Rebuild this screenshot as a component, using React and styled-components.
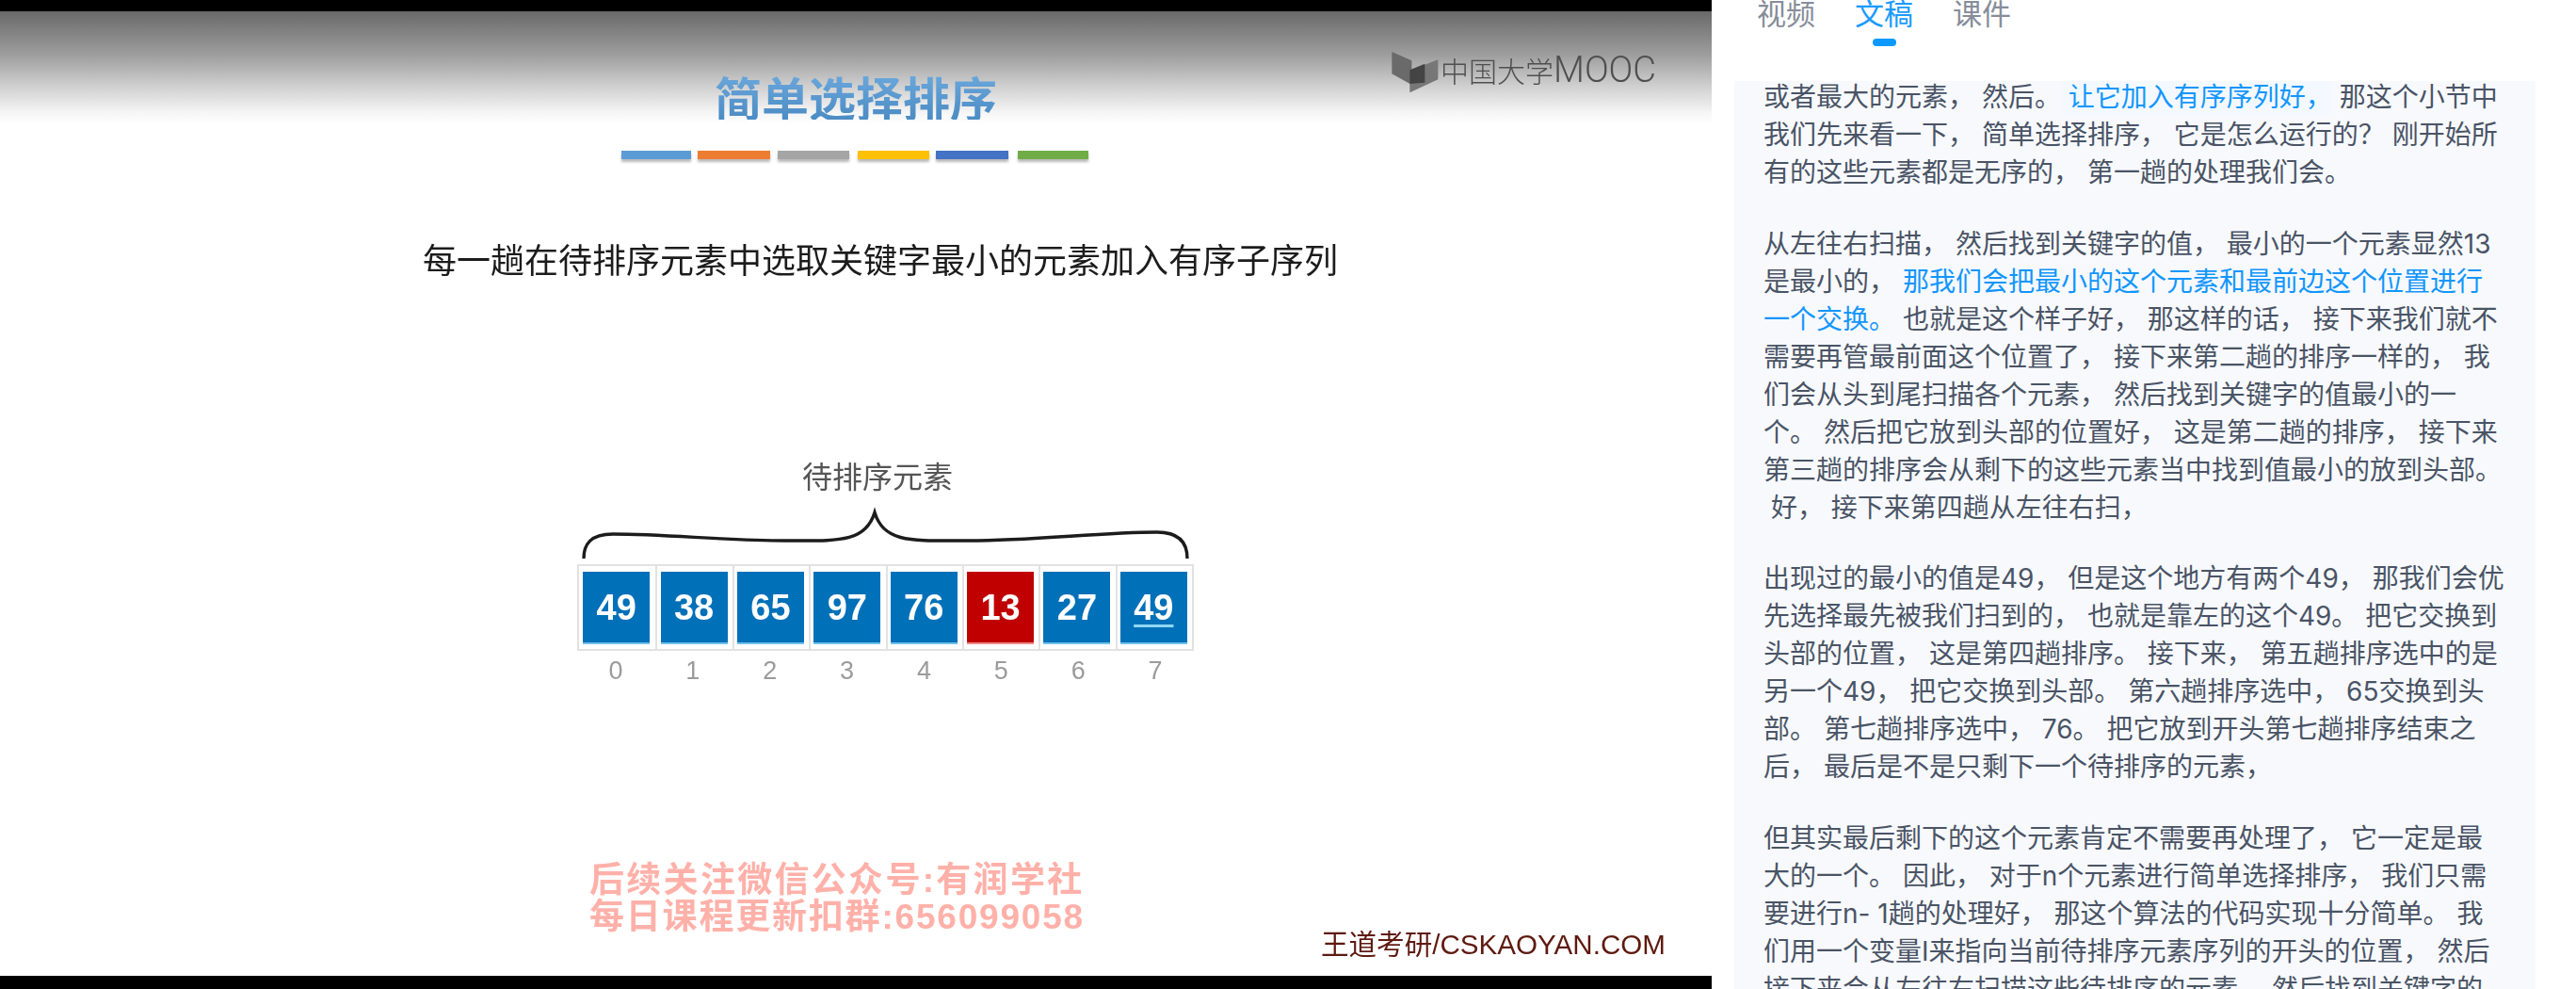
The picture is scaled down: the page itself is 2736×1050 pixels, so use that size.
import React from "react";
import styled, { createGlobalStyle } from "styled-components";

const Global = createGlobalStyle`
  html, body { margin: 0; padding: 0; background: #fff; overflow: hidden; }
  body { font-family: Inter, "Noto Sans CJK SC", sans-serif; }
`;

const Page = styled.div`
  display: flex;
  width: 2736px;
  height: 1050px;
  overflow: hidden;
`;

const VideoFrame = styled.div`
  flex: 0 0 1818px;
  height: 1050px;
  box-sizing: border-box;
  padding: 12px 0 14px;
  background: #000;
  display: flex;
`;

const Slide = styled.div`
  position: relative;
  flex: 1;
  display: flex;
  flex-direction: column;
  overflow: hidden;
  background: linear-gradient(to bottom, #696969 0, #a0a0a0 48px, #d0d0d0 80px, #f6f6f6 108px, #fff 120px);
  filter: blur(0.6px);
`;

const Logo = styled.div`
  position: absolute;
  top: 33px;
  left: 1470px;
  display: flex;
  align-items: center;
  color: #4f4f4f;
`;

const LogoCjk = styled.span`
  font-family: "Noto Sans CJK SC", sans-serif;
  font-weight: 300;
  font-size: 30px;
  line-height: 50px;
`;

const LogoLatin = styled.span`
  font-family: Roboto, sans-serif;
  font-weight: 300;
  font-size: 38px;
  line-height: 50px;
`;

const Title = styled.div`
  align-self: center;
  margin-top: 65px;
  font-family: "Noto Sans CJK SC", sans-serif;
  font-weight: 700;
  font-size: 50px;
  line-height: 50px;
  background: linear-gradient(to bottom, #6ba8dc, #4c8cc4);
  -webkit-background-clip: text;
  background-clip: text;
  color: transparent;
`;

const Bars = styled.div`
  display: flex;
  margin: 33px 0 0 660px;
`;

const Bar = styled.div`
  width: ${(p) => p.$w}px;
  height: 9px;
  margin-right: ${(p) => p.$gap}px;
  background: ${(p) => p.$c};
  box-shadow: 0 3px 3px rgba(0, 0, 0, 0.28);
`;

const Subtitle = styled.div`
  margin: 86px 0 0 449px;
  font-family: "Noto Sans CJK SC", sans-serif;
  font-size: 36px;
  line-height: 38px;
  color: #1c1c1c;
  white-space: nowrap;
`;

const ArrayLabel = styled.div`
  margin: 195px 0 0 852px;
  font-family: "Noto Sans CJK SC", sans-serif;
  font-size: 32px;
  line-height: 32px;
  color: #555;
`;

const Brace = styled.svg`
  display: block;
  margin: 23px 0 0 619px;
  width: 643px;
  height: 50px;
  overflow: visible;
`;

const Cells = styled.div`
  display: grid;
  grid-template-columns: repeat(8, 1fr);
  margin: 6px 0 0 613px;
  width: 655px;
  height: 92px;
  box-sizing: border-box;
  border: 2px solid #e2e2e2;
`;

const Cell = styled.div`
  display: flex;
  align-items: flex-start;
  justify-content: center;
  padding: 6px 2px 0 0;
  border-left: ${(p) => (p.$first ? "none" : "2px solid #e2e2e2")};
`;

const CellBox = styled.div`
  width: 71px;
  height: 77px;
  box-sizing: border-box;
  display: flex;
  align-items: center;
  justify-content: center;
  padding-top: 2px;
  background: ${(p) => (p.$red ? "#c00000" : "#0070b8")};
  border-bottom: 2px solid ${(p) => (p.$red ? "#e88" : "#6fc0ea")};
  color: #fff;
  font-family: "Liberation Sans", sans-serif;
  font-weight: 700;
  font-size: 38px;
  text-decoration: ${(p) => (p.$mark ? "underline" : "none")};
  text-decoration-color: #8fd8f4;
  text-decoration-thickness: 3px;
  text-underline-offset: 5px;
`;

const Indices = styled.div`
  display: grid;
  grid-template-columns: repeat(8, 1fr);
  margin: 8px 0 0 613px;
  width: 655px;
`;

const Index = styled.div`
  text-align: center;
  font-family: "Liberation Sans", sans-serif;
  font-size: 27px;
  line-height: 27px;
  color: #9b9b9b;
`;

const SlideFooter = styled.div`
  margin-top: auto;
  display: flex;
  align-items: flex-end;
  padding: 0 49px 17px 626px;
`;

const Watermark = styled.div`
  display: flex;
  flex-direction: column;
  gap: 1px;
  margin-bottom: 26px;
  color: #ffb1a9;
  font-family: "Liberation Sans", "Noto Sans CJK SC", sans-serif;
  font-weight: 700;
  font-size: 37px;
  line-height: 38px;
  white-space: nowrap;
`;

const WatermarkLine = styled.div`
  letter-spacing: ${(p) => p.$ls}px;
`;

const Credit = styled.div`
  margin-left: auto;
  font-family: "Liberation Sans", "Noto Sans CJK SC", sans-serif;
  font-size: 29.6px;
  line-height: 32px;
  color: #5e1a10;
  white-space: nowrap;
`;

const Side = styled.div`
  flex: 1;
  min-width: 0;
  display: flex;
  flex-direction: column;
  height: 1050px;
  padding: 0 43px 0 24px;
  box-sizing: border-box;
`;

const Tabs = styled.div`
  flex: 0 0 49px;
  display: flex;
  align-items: flex-end;
  gap: 42px;
  padding-left: 24px;
  overflow: hidden;
`;

const Tab = styled.div`
  display: flex;
  flex-direction: column;
  align-items: center;
  gap: 11px;
  font-family: "Noto Sans CJK SC", sans-serif;
  font-size: 31px;
  line-height: 34px;
  color: ${(p) => (p.$active ? "#1a9bff" : "#868d99")};
`;

const TabMark = styled.div`
  width: 25px;
  height: 8px;
  border-radius: 4px;
  background: ${(p) => (p.$active ? "#0d99ff" : "transparent")};
`;

const Transcript = styled.div`
  margin-top: 37px;
  flex: 1;
  min-height: 0;
  overflow: hidden;
  background: #f7f9fd;
  padding: 0 29px 0 31px;
`;

const TranscriptScroll = styled.div`
  margin-top: -3px;
`;

const Para = styled.p`
  margin: 0 0 35.5px;
  font-size: 28px;
  line-height: 40px;
  color: #4a5465;
`;

const Hl = styled.span`
  color: #1296ff;
  background: ${(p) => (p.$bg ? "#f3f9ff" : "transparent")};
  padding: 2px 0;
`;

const bars = [
  [74, 7, "#5b9bd5"],
  [77, 8, "#ed7d31"],
  [76, 9, "#a5a5a5"],
  [76, 7, "#ffc000"],
  [77, 10, "#4472c4"],
  [75, 0, "#70ad47"],
];
const values = [49, 38, 65, 97, 76, 13, 27, 49];

export default function App() {
  return (
    <Page>
      <Global />
      <VideoFrame>
        <Slide>
          <Logo>
            <svg width="60" height="57" viewBox="0 0 180 171">
              <polygon points="25,30 88,58 88,135 25,100" fill="#6a6a6a" />
              <polygon points="82,90 172,55 172,118 82,160" fill="#777" />
              <polygon points="82,88 130,68 130,128 82,132" fill="#444" />
            </svg>
            <LogoCjk>中国大学</LogoCjk>
            <LogoLatin>MOOC</LogoLatin>
          </Logo>
          <Title>简单选择排序</Title>
          <Bars>
            {bars.map(([w, gap, c]) => (
              <Bar key={c} $w={w} $gap={gap} $c={c} />
            ))}
          </Bars>
          <Subtitle>每一趟在待排序元素中选取关键字最小的元素加入有序子序列</Subtitle>
          <ArrayLabel>待排序元素</ArrayLabel>
          <Brace viewBox="0 0 643 50">
            <path
              d="M1 50 C1 35 8 24 32 24 C90 24 150 31 215 31 C270 31 300 34 310 1 C320 34 350 31 410 31 C480 31 550 22 610 22 C635 22 642 35 642 50"
              fill="none"
              stroke="#1c1c1c"
              strokeWidth="3.4"
            />
          </Brace>
          <Cells>
            {values.map((v, i) => (
              <Cell key={i} $first={i === 0}>
                <CellBox $red={v === 13} $mark={i === 7}>{v}</CellBox>
              </Cell>
            ))}
          </Cells>
          <Indices>
            {values.map((_, i) => (
              <Index key={i}>{i}</Index>
            ))}
          </Indices>
          <SlideFooter>
            <Watermark>
              <WatermarkLine $ls={2.3}>后续关注微信公众号:有润学社</WatermarkLine>
              <WatermarkLine $ls={1.8}>每日课程更新扣群:656099058</WatermarkLine>
            </Watermark>
            <Credit>王道考研/CSKAOYAN.COM</Credit>
          </SlideFooter>
        </Slide>
      </VideoFrame>
      <Side>
        <Tabs>
          <Tab>
            视频
            <TabMark />
          </Tab>
          <Tab $active>
            文稿
            <TabMark $active />
          </Tab>
          <Tab>
            课件
            <TabMark />
          </Tab>
        </Tabs>
        <Transcript>
          <TranscriptScroll>
            <Para>
              或者最大的元素， 然后。<Hl $bg> 让它加入有序序列好，</Hl> 那这个小节中我们先来看一下， 简单选择排序， 它是怎么运行的？ 刚开始所有的这些元素都是无序的， 第一趟的处理我们会。
            </Para>
            <Para>
              从左往右扫描， 然后找到关键字的值， 最小的一个元素显然13是最小的， <Hl>那我们会把最小的这个元素和最前边这个位置进行一个交换。</Hl> 也就是这个样子好， 那这样的话， 接下来我们就不需要再管最前面这个位置了， 接下来第二趟的排序一样的， 我们会从头到尾扫描各个元素， 然后找到关键字的值最小的一个。 然后把它放到头部的位置好， 这是第二趟的排序， 接下来第三趟的排序会从剩下的这些元素当中找到值最小的放到头部。 {"\u00a0"}好， 接下来第四趟从左往右扫，
            </Para>
            <Para>
              出现过的最小的值是49， 但是这个地方有两个49， 那我们会优先选择最先被我们扫到的， 也就是靠左的这个49。 把它交换到头部的位置， 这是第四趟排序。 接下来， 第五趟排序选中的是另一个49， 把它交换到头部。 第六趟排序选中， 65交换到头部。 第七趟排序选中， 76。 把它放到开头第七趟排序结束之后， 最后是不是只剩下一个待排序的元素，
            </Para>
            <Para>
              但其实最后剩下的这个元素肯定不需要再处理了， 它一定是最大的一个。 因此， 对于n个元素进行简单选择排序， 我们只需要进行n- 1趟的处理好， 那这个算法的代码实现十分简单。 我们用一个变量I来指向当前待排序元素序列的开头的位置， 然后接下来会从左往右扫描这些待排序的元素， 然后找到关键字的值最小的元素
            </Para>
          </TranscriptScroll>
        </Transcript>
      </Side>
    </Page>
  );
}
